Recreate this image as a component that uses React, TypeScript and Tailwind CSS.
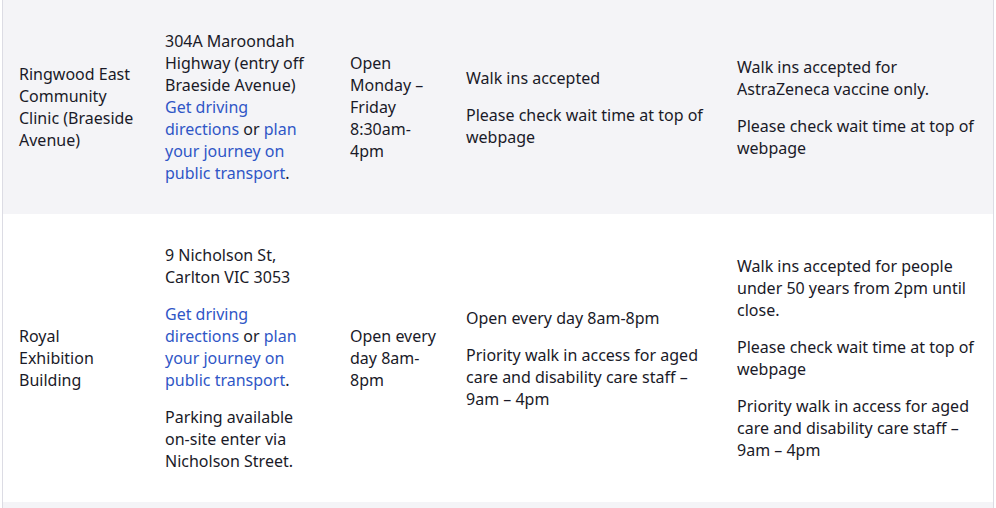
import React from 'react';

const link = 'text-[#2f56c6]';

const Cell: React.FC<{ children: React.ReactNode }> = ({ children }) => (
  <div className="flex flex-col justify-center px-[16px] py-[30px]">{children}</div>
);

export default function App() {
  return (
    <div className="w-[996px] h-[508px] overflow-hidden bg-white pl-[2px] pr-[2px] font-['Noto_Sans',sans-serif] text-[16px] leading-[22px] text-[#1a1a28]">
      <div className="border-l border-r border-[#dcdce4]">
        {/* row 1 */}
        <div className="grid grid-cols-[146px_185px_116px_271px_1fr] bg-[#f4f4f7]">
          <Cell>
            <p>
              Ringwood East Community <span className="whitespace-nowrap">Clinic (Braeside</span> Avenue)
            </p>
          </Cell>
          <Cell>
            <p>304A Maroondah Highway (entry off Braeside Avenue)</p>
            <p>
              <span className={link}>Get driving directions</span> or{' '}
              <span className={link}>plan your journey on public transport</span>.
            </p>
          </Cell>
          <Cell>
            <p>Open Monday – Friday 8:30am-4pm</p>
          </Cell>
          <Cell>
            <p className="mb-[15px]">Walk ins accepted</p>
            <p>Please check wait time at top of webpage</p>
          </Cell>
          <Cell>
            <p className="mb-[15px]">Walk ins accepted for AstraZeneca vaccine only.</p>
            <p>Please check wait time at top of webpage</p>
          </Cell>
        </div>

        {/* row 2 */}
        <div className="grid grid-cols-[146px_185px_116px_271px_1fr] bg-white">
          <Cell>
            <p>Royal Exhibition Building</p>
          </Cell>
          <Cell>
            <p className="mb-[15px]">9 Nicholson St, Carlton VIC 3053</p>
            <p className="mb-[15px]">
              <span className={link}>Get driving directions</span> or{' '}
              <span className={link}>plan your journey on public transport</span>.
            </p>
            <p>Parking available on-site enter via Nicholson Street.</p>
          </Cell>
          <Cell>
            <p>
              <span className="whitespace-nowrap">Open every</span> day 8am-8pm
            </p>
          </Cell>
          <Cell>
            <p className="mb-[15px]">Open every day 8am-8pm</p>
            <p>Priority walk in access for aged care and disability care staff – 9am – 4pm</p>
          </Cell>
          <Cell>
            <p className="mb-[15px]">Walk ins accepted for people under 50 years from 2pm until close.</p>
            <p className="mb-[15px]">Please check wait time at top of webpage</p>
            <p>Priority walk in access for aged care and disability care staff – 9am – 4pm</p>
          </Cell>
        </div>

        {/* row 3 (cut off) */}
        <div className="h-[60px] bg-[#f4f4f7]" />
      </div>
    </div>
  );
}
